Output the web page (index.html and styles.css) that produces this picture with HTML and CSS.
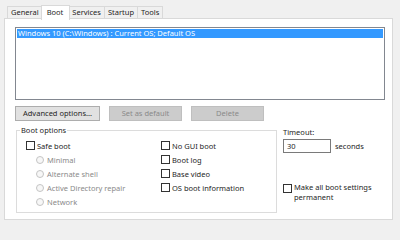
FILE: index.html
```html
<!DOCTYPE html>
<html>
<head>
<meta charset="utf-8">
<link rel="stylesheet" href="styles.css">
</head>
<body>
<div class="tabs">
  <div class="tab">General</div>
  <div class="tab active">Boot</div>
  <div class="tab">Services</div>
  <div class="tab">Startup</div>
  <div class="tab">Tools</div>
</div>
<div class="panel">
  <div class="list">
    <div class="row sel">Windows 10 (C:\Windows) : Current OS; Default OS</div>
  </div>
  <div class="buttons">
    <div class="btn">Advanced options...</div>
    <div class="btn disabled">Set as default</div>
    <div class="btn disabled">Delete</div>
  </div>
  <div class="bottom">
    <fieldset class="group">
      <legend>Boot options</legend>
      <div class="cols">
        <div class="col first">
          <div class="opt"><span class="cb"></span>Safe boot</div>
          <div class="opt sub dis"><span class="rb"></span>Minimal</div>
          <div class="opt sub dis"><span class="rb"></span>Alternate shell</div>
          <div class="opt sub dis"><span class="rb"></span>Active Directory repair</div>
          <div class="opt sub dis"><span class="rb"></span>Network</div>
        </div>
        <div class="col">
          <div class="opt"><span class="cb"></span>No GUI boot</div>
          <div class="opt"><span class="cb"></span>Boot log</div>
          <div class="opt"><span class="cb"></span>Base video</div>
          <div class="opt"><span class="cb"></span>OS boot information</div>
        </div>
      </div>
    </fieldset>
    <div class="side">
      <div class="lbl">Timeout:</div>
      <div class="timeout"><div class="input">30</div><span>seconds</span></div>
      <div class="perm"><span class="cb"></span><span>Make all boot settings<br>permanent</span></div>
    </div>
  </div>
</div>
</body>
</html>
```
FILE: styles.css
```css
html, body {
  margin: 0;
  padding: 0;
}
body {
  width: 400px;
  height: 225px;
  background: #f0f0f0;
  font-family: "Noto Sans", "Open Sans", sans-serif;
  font-size: 7.5px;
  color: #1e1e1e;
  overflow: hidden;
}
.tabs {
  display: flex;
  align-items: flex-end;
  height: 19px;
  box-sizing: border-box;
  padding: 4px 0 0 7px;
}
.tab {
  height: 12px;
  box-sizing: border-box;
  border: 1px solid #d9d9d9;
  border-bottom: 0;
  border-right: 0;
  padding: 0 3px;
  line-height: 10px;
  background: #f0f0f0;
  margin-bottom: 1px;
}
.tab:last-child {
  border-right: 1px solid #d9d9d9;
}
.tab.active {
  height: 15px;
  background: #fff;
  margin: 0 -1px -1px -1px;
  padding: 0 6px 0 5px;
  border-right: 1px solid #d9d9d9;
  position: relative;
  z-index: 1;
  line-height: 12px;
}
.tab.active + .tab {
  border-left: 0;
}
.panel {
  margin: -1px 7px 0 4px;
  height: 202px;
  box-sizing: border-box;
  background: #fff;
  border: 1px solid #d9d9d9;
  padding: 8px 7px 0 10px;
}
.list {
  height: 73px;
  box-sizing: border-box;
  border: 1px solid #828790;
  padding: 1px;
}
.row {
  height: 9px;
  line-height: 9px;
  padding-left: 1px;
}
.row.sel {
  background: #3399ff;
  color: #fff;
}
.buttons {
  display: flex;
  gap: 9px;
  margin-top: 6px;
}
.btn {
  width: 85px;
  height: 15px;
  box-sizing: border-box;
  border: 1px solid #adadad;
  background: #e1e1e1;
  text-align: center;
  line-height: 13px;
}
.btn.disabled {
  width: 73px;
  border-color: #bfbfbf;
  background: #cccccc;
  color: #8a8a8a;
}
.bottom {
  display: flex;
  margin-top: 4px;
}
.group {
  margin: 0 0 0 1px;
  width: 261px;
  height: 88px;
  box-sizing: border-box;
  border: 1px solid #dcdcdc;
  padding: 4px 0 0 3px;
  min-width: 0;
}
.group legend {
  padding: 0 1px;
  margin-left: 0;
  line-height: 10px;
}
.cols {
  display: flex;
  margin-left: 6px;
}
.col {
  display: flex;
  flex-direction: column;
}
.col.first {
  width: 135px;
  flex: none;
}
.opt {
  display: flex;
  align-items: center;
  height: 13.9px;
}
.opt.sub {
  padding-left: 10px;
}
.opt.dis {
  color: #8a8a8a;
}
.cb {
  width: 9px;
  height: 9px;
  box-sizing: border-box;
  border: 1px solid #333;
  background: #fff;
  margin-right: 2px;
  flex: none;
}
.rb {
  width: 8px;
  height: 8px;
  box-sizing: border-box;
  border: 1px solid #c4c4c4;
  border-radius: 50%;
  background: #f7f7f7;
  margin-right: 3px;
  flex: none;
}
.side {
  margin-left: 6px;
  padding-top: 2px;
  display: flex;
  flex-direction: column;
}
.lbl {
  line-height: 10px;
}
.timeout {
  display: flex;
  align-items: center;
  margin-top: 2px;
}
.input {
  width: 48px;
  height: 14px;
  box-sizing: border-box;
  border: 1px solid #7a7a7a;
  padding-left: 3px;
  line-height: 12px;
  margin-right: 4px;
}
.perm {
  display: flex;
  align-items: flex-start;
  margin-top: 30px;
  line-height: 9.5px;
}
.perm .cb {
  margin-top: 1px;
}
```
